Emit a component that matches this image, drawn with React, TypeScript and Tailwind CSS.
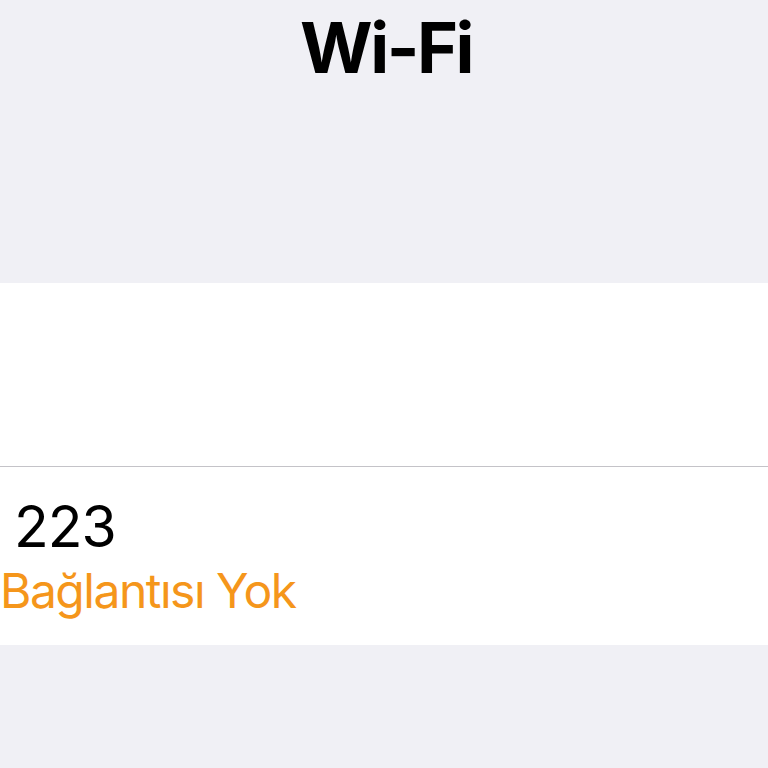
export default function App() {
  return (
    <div className="w-[768px] h-[768px] overflow-hidden bg-[#f0f0f5] flex flex-col" style={{ fontFamily: 'Inter, "Liberation Sans", sans-serif' }}>
      <div className="h-[283px] flex justify-center pt-[13px]">
        <h1 className="text-[70px] leading-none font-bold text-black ml-[4px] tracking-[-2.5px]">Wi-Fi</h1>
      </div>
      <div className="bg-white h-[362px] flex flex-col">
        <div className="h-[183px]" />
        <div className="h-[1px] bg-[#c4c3c8]" />
        <div className="flex-1 flex flex-col pt-[31px] overflow-hidden">
          <div className="text-[57px] leading-none text-black whitespace-nowrap pl-[14px] tracking-[-1px]">223</div>
          <div className="text-[48px] leading-none text-[#f5961b] whitespace-nowrap mt-[12px] tracking-[-1.5px]">Bağlantısı Yok</div>
        </div>
      </div>
      <div className="flex-1" />
    </div>
  );
}
